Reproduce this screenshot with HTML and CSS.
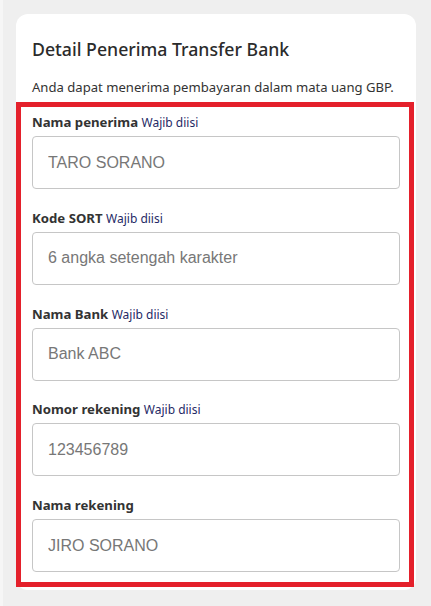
FILE: index.html
```html
<!DOCTYPE html>
<html lang="id">
<head>
  <meta charset="UTF-8">
  <meta name="viewport" content="width=device-width, initial-scale=1.0">
  <title>Detail Penerima Transfer Bank</title>
  <link rel="stylesheet" href="styles.css">
</head>
<body>
  <div class="page">
    <section class="card">
      <div class="card-head">
        <h2>Detail Penerima Transfer Bank</h2>
        <p>Anda dapat menerima pembayaran dalam mata uang GBP.</p>
      </div>

      <form class="bank-form">
        <div class="field">
          <label for="recipient">Nama penerima <span class="req">Wajib diisi</span></label>
          <input type="text" id="recipient" placeholder="TARO SORANO">
        </div>

        <div class="field">
          <label for="sort-code">Kode SORT <span class="req">Wajib diisi</span></label>
          <input type="text" id="sort-code" placeholder="6 angka setengah karakter">
        </div>

        <div class="field">
          <label for="bank-name">Nama Bank <span class="req">Wajib diisi</span></label>
          <input type="text" id="bank-name" placeholder="Bank ABC">
        </div>

        <div class="field">
          <label for="account-no">Nomor rekening <span class="req">Wajib diisi</span></label>
          <input type="text" id="account-no" placeholder="123456789">
        </div>

        <div class="field">
          <label for="account-name">Nama rekening</label>
          <input type="text" id="account-name" placeholder="JIRO SORANO">
        </div>
      </form>
    </section>
  </div>
</body>
</html>
```

FILE: styles.css
```css
body {
  margin: 0;
  padding: 0;
  background-color: #efefef;
  font-family: "Segoe UI", "Noto Sans", sans-serif;
  color: #333;
}

.page {
  border-left: 3px solid #f6f6f6;
  padding: 14px 15px 16px 13px;
}

.card {
  width: 400px;
  background-color: #fff;
  border-radius: 12px;
  padding: 23px 0 3px;
}

.card-head {
  padding: 0 16px;
}

.card-head h2 {
  margin: 0;
  font-size: 17.7px;
  line-height: 24px;
  font-weight: 500;
  color: #2b2b2b;
}

.card-head p {
  margin: 16px 0 5px;
  font-size: 13.1px;
  line-height: 20px;
  color: #333;
}

.bank-form {
  width: 398px;
  box-sizing: border-box;
  border: 5px solid #e4202b;
  padding: 5px 9px 10px 11px;
}

.field + .field {
  margin-top: 18.75px;
}

.field label {
  display: block;
  height: 20px;
  font-size: 13.2px;
  line-height: 20px;
  font-weight: bold;
  color: #333;
  margin-bottom: 4px;
}

.field .req {
  font-size: 12px;
  line-height: 1;
  font-weight: normal;
  color: #1f2a66;
}

.field input {
  display: block;
  width: 368px;
  height: 53px;
  box-sizing: border-box;
  border: 1px solid #c6c6c6;
  border-radius: 4px;
  padding: 0 15px;
  font-family: "Liberation Sans", Arial, sans-serif;
  font-size: 16px;
  color: #333;
  outline: none;
}

.field input::placeholder {
  color: #777;
}
```
